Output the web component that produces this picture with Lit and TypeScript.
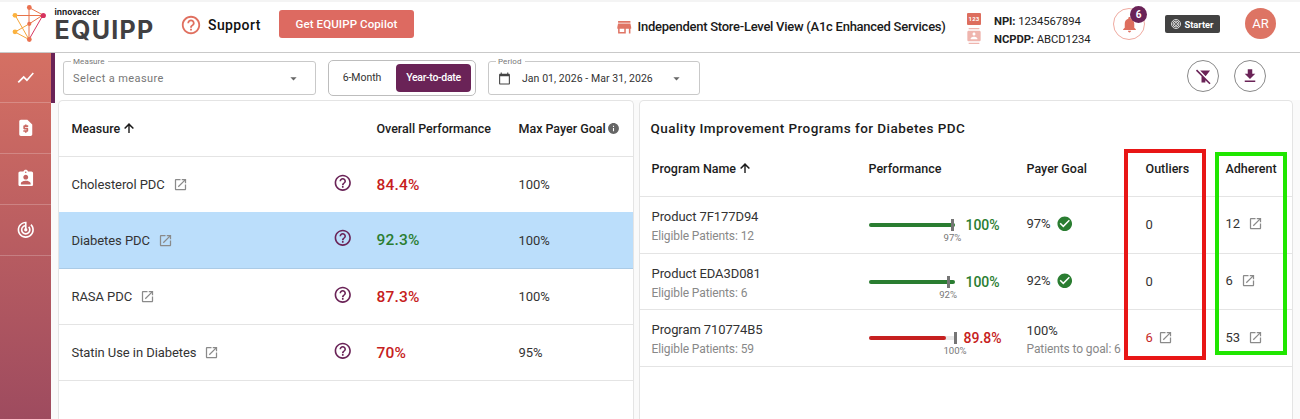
// app/src/app-root.ts
import { html, css, svg, LitElement } from 'lit';
import { customElement, property } from 'lit/decorators.js';
import { classMap } from 'lit/directives/class-map.js';

const ICONS: Record<string, string> = {
  chart: 'M3.5 18.49l6-6.01 4 4L22 6.92l-1.41-1.41-7.09 7.97-4-4L2 16.99z',
  quote:
    'M14 2H6c-1.1 0-1.99.9-1.99 2L4 20c0 1.1.89 2 1.99 2H18c1.1 0 2-.9 2-2V8l-6-6zm1 9h-4v1h3c.55 0 1 .45 1 1v3c0 .55-.45 1-1 1h-1v1h-2v-1H9v-2h4v-1h-3c-.55 0-1-.45-1-1v-3c0-.55.45-1 1-1h1V8h2v1h2v2z',
  patient:
    'M19 3h-4.18C14.4 1.84 13.3 1 12 1c-1.3 0-2.4.84-2.82 2H5c-1.1 0-2 .9-2 2v14c0 1.1.9 2 2 2h14c1.1 0 2-.9 2-2V5c0-1.1-.9-2-2-2zm-7 0c.55 0 1 .45 1 1s-.45 1-1 1-1-.45-1-1 .45-1 1-1zm0 4c1.66 0 3 1.34 3 3s-1.34 3-3 3-3-1.34-3-3 1.34-3 3-3zm6 12H6v-1.4c0-2 4-3.1 6-3.1s6 1.1 6 3.1V19z',
  track:
    'M19.07 4.93l-1.41 1.41C19.1 7.79 20 9.79 20 12c0 4.42-3.58 8-8 8s-8-3.58-8-8c0-4.08 3.05-7.44 7-7.93v2.02C8.16 6.57 6 9.03 6 12c0 3.31 2.69 6 6 6s6-2.69 6-6c0-1.66-.67-3.16-1.76-4.24l-1.41 1.41C15.55 9.9 16 10.9 16 12c0 2.21-1.79 4-4 4s-4-1.79-4-4c0-1.86 1.28-3.41 3-3.86v2.14c-.6.35-1 .98-1 1.72 0 1.1.9 2 2 2s2-.9 2-2c0-.74-.4-1.38-1-1.72V2h-1C6.48 2 2 6.48 2 12s4.48 10 10 10 10-4.48 10-10c0-2.76-1.12-5.26-2.93-7.07z',
  help: 'M11 18h2v-2h-2v2zm1-16C6.48 2 2 6.48 2 12s4.48 10 10 10 10-4.48 10-10S17.52 2 12 2zm0 18c-4.41 0-8-3.59-8-8s3.59-8 8-8 8 3.59 8 8-3.59 8-8 8zm0-14c-2.21 0-4 1.79-4 4h2c0-1.1.9-2 2-2s2 .9 2 2c0 2-3 1.75-3 5h2c0-2.25 3-2.5 3-5 0-2.21-1.79-4-4-4z',
  store: 'M20 4H4v2h16V4zm1 10v-2l-1-5H4l-1 5v2h1v6h10v-6h4v6h2v-6h1zm-9 4H6v-4h6v4z',
  bell: 'M12 22c1.1 0 2-.9 2-2h-4c0 1.1.89 2 2 2zm6-6v-5c0-3.07-1.64-5.64-4.5-6.32V4c0-.83-.67-1.5-1.5-1.5s-1.5.67-1.5 1.5v.68C7.63 5.36 6 7.92 6 11v5l-2 2v1h16v-1l-2-2z',
  contact:
    'M20 0H4v2h16V0zM4 24h16v-2H4v2zM20 4H4c-1.1 0-2 .9-2 2v12c0 1.1.9 2 2 2h16c1.1 0 2-.9 2-2V6c0-1.1-.9-2-2-2zm-8 2.75c1.24 0 2.25 1.01 2.25 2.25s-1.01 2.25-2.25 2.25S9.75 10.24 9.75 9 10.76 6.75 12 6.75zM17 17H7v-1.5c0-1.67 3.33-2.5 5-2.5s5 .83 5 2.5V17z',
  download: 'M19 9h-4V3H9v6H5l7 7 7-7zM5 18v2h14v-2H5z',
  calendar:
    'M20 3h-1V1h-2v2H7V1H5v2H4c-1.1 0-2 .9-2 2v16c0 1.1.9 2 2 2h16c1.1 0 2-.9 2-2V5c0-1.1-.9-2-2-2zm0 18H4V8h16v13z',
  up: 'M3.600 12l1.800 1.800 5.400-5.300V20.500h2.400V8.500l5.400 5.300 1.800-1.800L12 3.600z',
  open: 'M19 19H5V5h7V3H5c-1.11 0-2 .9-2 2v14c0 1.1.89 2 2 2h14c1.1 0 2-.9 2-2v-7h-2v7zM14 3v2h3.59l-9.83 9.83 1.41 1.41L19 6.41V10h2V3h-7z',
  info: 'M12 2C6.48 2 2 6.48 2 12s4.48 10 10 10 10-4.48 10-10S17.52 2 12 2zm1 15h-2v-6h2v6zm0-8h-2V7h2v2z',
  check:
    'M12 2C6.48 2 2 6.48 2 12s4.48 10 10 10 10-4.48 10-10S17.52 2 12 2zm-2 15l-5-5 1.41-1.41L10 14.17l7.59-7.59L19 8l-9 9z',
  down: 'M7 10l5 5 5-5z',
  filterOff: 'M21.300 3.600H7.300l7.700 8.200zM2.900 2.200L1.300 3.800l7.900 8V20.500h5.400v-3.300l5.800 5.800 1.600-1.600z',
};

interface Measure {
  name: string;
  performance: string;
  goal: string;
  met: boolean;
  selected?: boolean;
}

interface Program {
  name: string;
  eligible: number;
  performance: number;
  goal: number;
  toGoal?: number;
  outliers: number;
  adherent: number;
}

@customElement('eq-icon')
export class EqIcon extends LitElement {
  @property() name = '';
  @property({ type: Number }) size = 20;

  render() {
    return html`
      <svg width=${this.size} height=${this.size} viewBox="0 0 24 24" fill="currentColor">
        ${svg`<path d=${ICONS[this.name]}></path>`}
      </svg>
    `;
  }

  static styles = css`
    :host {
      display: inline-flex;
      flex: none;
    }
    svg {
      display: block;
      overflow: visible;
    }
  `;
}

@customElement('eq-header')
export class EqHeader extends LitElement {
  render() {
    return html`
      <div class="brand">
        <svg class="mark" width="36" height="40" viewBox="11 3 36 40" stroke-width="1">
          <g stroke="#f5a53c">
            <path d="M15 15L29 39.5" />
            <path d="M15 32L29 39.5" />
            <path d="M15 32L29 24" />
          </g>
          <g stroke="#e8734a">
            <path d="M29 7.500V39.500" />
            <path d="M15 15.500H43" />
            <path d="M29 7.500L43 15" />
            <path d="M29 24L43 15" />
          </g>
          <path d="M43 15L29 39.5" stroke="#d8365f" />
          <circle cx="29.300" cy="7.500" r="2.400" fill="#ea7150" />
          <circle cx="15" cy="15.300" r="2.400" fill="#fbb23e" />
          <circle cx="43.300" cy="15.500" r="2.600" fill="#d6335f" />
          <circle cx="29.300" cy="23.800" r="2.100" fill="#e8704f" />
          <circle cx="15" cy="31.800" r="2.400" fill="#fbb23e" />
          <circle cx="29.300" cy="39.500" r="2.400" fill="#ea7150" />
        </svg>
        <div class="wordmark">
          <span class="company">innovaccer</span>
          <span class="product">EQUIPP</span>
        </div>
      </div>
      <div class="support"><eq-icon name="help" size="22"></eq-icon><span>Support</span></div>
      <button class="copilot">Get EQUIPP Copilot</button>
      <div class="store"><eq-icon name="store" size="18.5"></eq-icon><span>Independent Store-Level View (A1c Enhanced Services)</span></div>
      <div class="id-icons">
        <span class="digits">123</span>
        <eq-icon class="contact" name="contact" size="16"></eq-icon>
      </div>
      <div class="ids">
        <div><b>NPI:</b> 1234567894</div>
        <div><b>NCPDP:</b> ABCD1234</div>
      </div>
      <div class="bell">
        <eq-icon name="bell" size="19"></eq-icon>
        <span class="count">6</span>
      </div>
      <div class="plan">
        <svg width="10" height="10" viewBox="0 0 10 10" fill="none" stroke="#fff" stroke-width=".8">
          <circle cx="5" cy="5" r="4.500" />
          <circle cx="5" cy="5" r="3" />
          <circle cx="5" cy="5" r="1.500" />
        </svg>
        <span>Starter</span>
      </div>
      <div class="avatar">AR</div>
    `;
  }

  static styles = css`
    :host {
      box-sizing: border-box;
      display: grid;
      grid-template-columns: 169px 98px 337px 352px 27px 119px 52px 80px 1fr;
      align-items: start;
      height: 53px;
      padding-left: 11px;
      border-top: 2px solid #f4f4f4;
      border-bottom: 1px solid #c9c9c9;
      background: #fff;
      white-space: nowrap;
    }
    .brand {
      display: flex;
      padding-top: 1px;
    }
    .wordmark {
      display: flex;
      flex-direction: column;
      margin-left: 7.500px;
      color: #414042;
      font-family: Inter, sans-serif;
    }
    .company {
      height: 14px;
      margin-top: 2px;
      font-size: 8.400px;
      line-height: 14px;
      font-weight: 700;
      color: #222;
    }
    .product {
      font-size: 25px;
      line-height: 22px;
      font-weight: 650;
      letter-spacing: 1.3px;
    }
    .support {
      display: flex;
      align-items: center;
      gap: 6px;
      padding-top: 12px;
      color: #e07060;
    }
    .support span {
      color: #111;
      font-size: 14px;
      line-height: 22px;
      font-weight: 500;
      letter-spacing: 0.4px;
    }
    .copilot {
      width: 135px;
      height: 28px;
      margin-top: 8px;
      margin-left: 1px;
      padding: 0 0 1px;
      border: 0;
      border-radius: 3px;
      background: #dd6a61;
      color: #fff;
      font-family: inherit;
      font-size: 11.500px;
      font-weight: 500;
      letter-spacing: 0.1px;
    }
    .store {
      display: flex;
      align-items: center;
      gap: 4px;
      padding-top: 14px;
      color: #e07565;
      font-size: 13px;
      line-height: 22px;
      font-weight: 500;
      letter-spacing: -0.26px;
    }
    .store span {
      color: #1a1a1a;
    }
    .id-icons {
      display: flex;
      flex-direction: column;
      align-items: center;
      width: 14px;
      padding-top: 11px;
      gap: 3px;
    }
    .digits {
      width: 14px;
      height: 12px;
      border-radius: 1px;
      background: #dd6e5e;
      color: #fff;
      font-size: 6px;
      line-height: 12px;
      font-weight: 700;
      text-align: center;
      letter-spacing: 0.2px;
    }
    .contact {
      color: #efb5ae;
    }
    .ids {
      padding-top: 11px;
      color: #222;
      font-size: 11.300px;
      line-height: 17.500px;
      letter-spacing: -0.08px;
    }
    .bell {
      position: relative;
      display: flex;
      align-items: center;
      justify-content: center;
      box-sizing: border-box;
      width: 32px;
      height: 32px;
      margin-top: 6px;
      border: 1px solid #efaaa0;
      border-radius: 50%;
      color: #dd6e5e;
    }
    .count {
      position: absolute;
      top: -3px;
      right: -3px;
      width: 17px;
      height: 17px;
      border-radius: 50%;
      background: #6a2357;
      color: #fff;
      font-size: 10px;
      line-height: 17px;
      font-weight: 700;
      text-align: center;
    }
    .plan {
      display: flex;
      align-items: center;
      justify-content: center;
      gap: 3px;
      width: 55px;
      height: 18px;
      margin-top: 13px;
      border-radius: 2px;
      background: #424242;
      color: #fff;
      font-size: 9.300px;
      font-weight: 700;
    }
    .avatar {
      width: 31px;
      height: 31px;
      margin-top: 6px;
      border-radius: 50%;
      background: #dd7464;
      color: #fff;
      font-size: 13px;
      line-height: 31px;
      text-align: center;
    }
  `;
}

@customElement('eq-toolbar')
export class EqToolbar extends LitElement {
  render() {
    return html`
      <fieldset class="measure">
        <legend>Measure</legend>
        <div class="value placeholder"><span>Select a measure</span><eq-icon name="down" size="15"></eq-icon></div>
      </fieldset>
      <div class="toggle">
        <span class="option">6-Month</span>
        <span class="option active">Year-to-date</span>
      </div>
      <fieldset class="period">
        <legend>Period</legend>
        <div class="value">
          <eq-icon class="calendar" name="calendar" size="13"></eq-icon>
          <span class="dates">Jan 01, 2026 - Mar 31, 2026</span>
          <eq-icon name="down" size="15"></eq-icon>
        </div>
      </fieldset>
      <div class="actions">
        <span class="round"><eq-icon name="filterOff" size="17"></eq-icon></span>
        <span class="round"><eq-icon name="download" size="18"></eq-icon></span>
      </div>
    `;
  }

  static styles = css`
    :host {
      display: flex;
      align-items: flex-start;
      height: 47px;
      padding: 0 34px 0 12px;
      background: #fff;
      white-space: nowrap;
    }
    fieldset {
      box-sizing: border-box;
      height: 40px;
      margin: 2px 0 0;
      padding: 0 9px;
      border: 1px solid #c9c9c9;
      border-radius: 3px;
    }
    legend {
      height: 12px;
      margin-left: -2px;
      padding: 0 3px 0 2px;
      color: #777;
      font-size: 8px;
      line-height: 13px;
      letter-spacing: 0.1px;
    }
    .measure {
      width: 253px;
    }
    .period {
      width: 212px;
      margin-left: 12px;
      padding-right: 0;
    }
    .value {
      display: flex;
      align-items: center;
      height: 22px;
      color: #333;
      font-size: 10.500px;
      letter-spacing: 0.06px;
    }
    .value eq-icon {
      color: #666;
    }
    .value .calendar {
      margin-right: 11px;
      color: #444;
    }
    .dates {
      flex: none;
      margin-right: 16px;
    }
    .placeholder {
      justify-content: space-between;
      padding-right: 5px;
      color: #777;
      font-size: 11px;
      letter-spacing: 0.4px;
    }
    .toggle {
      display: flex;
      box-sizing: border-box;
      width: 148px;
      height: 36px;
      margin: 7px 0 0 12px;
      padding: 3px 5px 3px 3px;
      border: 1px solid #bdbdbd;
      border-radius: 5px;
    }
    .option {
      flex: none;
      width: 64px;
      padding-right: 0;
      border-radius: 4px;
      color: #333;
      font-size: 10.500px;
      line-height: 28px;
      text-align: center;
      letter-spacing: -0.05px;
      text-indent: -4px;
    }
    .option.active {
      width: 75px;
      background: #6a2357;
      color: #fff;
      font-weight: 500;
      letter-spacing: -0.3px;
      text-indent: 0;
    }
    .actions {
      display: flex;
      gap: 15px;
      margin: 7px 0 0 auto;
    }
    .round {
      display: flex;
      align-items: center;
      justify-content: center;
      box-sizing: border-box;
      width: 32px;
      height: 32px;
      border: 1px solid #8a8a8a;
      border-radius: 50%;
      color: #6a2357;
    }
  `;
}

@customElement('app-root')
export class AppRoot extends LitElement {
  @property({ type: Array }) navItems: string[] = ['chart', 'quote', 'patient', 'track'];

  @property({ type: Array }) measures: Measure[] = [
    { name: 'Cholesterol PDC', performance: '84.4%', goal: '100%', met: false },
    { name: 'Diabetes PDC', performance: '92.3%', goal: '100%', met: true, selected: true },
    { name: 'RASA PDC', performance: '87.3%', goal: '100%', met: false },
    { name: 'Statin Use in Diabetes', performance: '70%', goal: '95%', met: false },
  ];

  @property({ type: Array }) programs: Program[] = [
    { name: 'Product 7F177D94', eligible: 12, performance: 100, goal: 97, outliers: 0, adherent: 12 },
    { name: 'Product EDA3D081', eligible: 6, performance: 100, goal: 92, outliers: 0, adherent: 6 },
    { name: 'Program 710774B5', eligible: 59, performance: 89.8, goal: 100, toGoal: 6, outliers: 6, adherent: 53 },
  ];

  renderMeasure(m: Measure) {
    return html`
      <div class=${classMap({ row: true, selected: !!m.selected })}>
        <div class="name"><span>${m.name}</span><eq-icon class="open" name="open" size="15"></eq-icon></div>
        <eq-icon class="why" name="help" size="19.5"></eq-icon>
        <div class=${classMap({ score: true, met: m.met })}>${m.performance}</div>
        <div>${m.goal}</div>
      </div>
    `;
  }

  renderProgram(p: Program) {
    const met = p.performance >= p.goal;
    return html`
      <div class="program">
        <div class="stacked">
          <div class="title">${p.name}</div>
          <div class="sub">Eligible Patients: ${p.eligible}</div>
        </div>
        <div class=${classMap({ perf: true, met })}>
          <div class="track">
            <div class="fill" style="width:${p.performance}%"></div>
            <div class="tick" style="left:${p.goal}%"></div>
            <div class="tick-label" style="left:${p.goal}%">${p.goal}%</div>
          </div>
          <div class="percent">${p.performance}%</div>
        </div>
        <div class=${classMap({ stacked: !!p.toGoal, raised: !p.toGoal })}>
          <div class="goal">${p.goal}%${met ? html`<eq-icon class="ok" name="check" size="17.5"></eq-icon>` : ''}</div>
          ${p.toGoal ? html`<div class="sub">Patients to goal: ${p.toGoal}</div>` : ''}
        </div>
        <div class=${classMap({ outliers: true, some: p.outliers > 0 })}>
          ${p.outliers}${p.outliers > 0 ? html`<eq-icon class="open" name="open" size="15"></eq-icon>` : ''}
        </div>
        <div class="adherent">${p.adherent}<eq-icon class="open" name="open" size="15"></eq-icon></div>
      </div>
    `;
  }

  render() {
    return html`
      <eq-header></eq-header>
      <div class="body">
        <nav>
          ${this.navItems.map(
            (name, index) => html`
              <div class=${classMap({ item: true, current: index === 0 })}>
                <eq-icon name=${name} size="19.5"></eq-icon>
              </div>
            `
          )}
        </nav>
        <main>
          <eq-toolbar></eq-toolbar>
          <div class="panels">
            <section class="measures">
              <div class="row head">
                <div class="sorted">Measure<eq-icon name="up" size="14"></eq-icon></div>
                <div></div>
                <div>Overall Performance</div>
                <div class="max">Max Payer Goal<eq-icon name="info" size="13"></eq-icon></div>
              </div>
              ${this.measures.map((m) => this.renderMeasure(m))}
            </section>
            <section class="programs">
              <h2>Quality Improvement Programs for Diabetes PDC</h2>
              <div class="program head">
                <div class="sorted">Program Name<eq-icon name="up" size="14"></eq-icon></div>
                <div>Performance</div>
                <div>Payer Goal</div>
                <div>Outliers</div>
                <div>Adherent</div>
              </div>
              ${this.programs.map((p) => this.renderProgram(p))}
              <div class="mark-outliers"></div>
              <div class="mark-adherent"></div>
            </section>
          </div>
        </main>
      </div>
    `;
  }

  static styles = css`
    :host {
      display: flex;
      flex-direction: column;
      width: 1300px;
      height: 419px;
      overflow: hidden;
      background: #fafafa;
      color: #333;
      font-family: Roboto, sans-serif;
      font-size: 13px;
    }
    .body {
      display: flex;
      flex: 1;
      min-height: 0;
    }
    nav {
      flex: none;
      width: 51px;
      background: linear-gradient(#d57063, #9e4b5f);
      color: #fff;
    }
    .item {
      display: flex;
      align-items: center;
      justify-content: center;
      box-sizing: border-box;
      height: 51px;
      border-bottom: 1px solid rgba(255, 255, 255, 0.22);
    }
    .item.current {
      position: relative;
      height: 50px;
    }
    .item.current::after {
      content: '';
      position: absolute;
      left: 51px;
      top: 0;
      width: 4px;
      height: 50px;
      background: #6a2357;
    }
    main {
      display: flex;
      flex: 1;
      flex-direction: column;
      min-width: 0;
    }
    .panels {
      display: flex;
      flex: 1;
      gap: 5px;
      padding: 0 7px 0 7px;
    }
    section {
      box-sizing: border-box;
      border: 1px solid #e4e4e4;
      border-bottom: 0;
      border-radius: 5px 5px 0 0;
      background: #fff;
      white-space: nowrap;
    }
    .measures {
      width: 576px;
    }
    .row {
      display: grid;
      grid-template-columns: 262px 43px 142px 1fr;
      align-items: center;
      box-sizing: border-box;
      height: 56px;
      padding-left: 12.500px;
      border-bottom: 1px solid #e4e4e4;
      letter-spacing: -0.07px;
    }
    .row.selected {
      background: #bbdefb;
      height: 57px;
      margin-top: -1px;
      border-color: #abcbe6;
    }
    .row.head {
      padding-bottom: 1px;
      letter-spacing: -0.02px;
    }
    .head {
      color: #1c1c1c;
      font-size: 12.500px;
      font-weight: 500;
    }
    .sorted,
    .max {
      display: flex;
      align-items: center;
      gap: 2px;
    }
    .max eq-icon {
      color: #666;
    }
    .max {
      gap: 1px;
    }
    .name {
      display: flex;
      align-items: center;
      gap: 8px;
    }
    .open {
      color: #8a8a8a;
    }
    .why {
      margin-top: -4px;
      margin-left: -1px;
      color: #6a2357;
    }
    .score {
      color: #c62020;
      font-size: 15.500px;
      font-weight: 480;
      letter-spacing: 0.2px;
    }
    .score.met {
      color: #2a7d31;
    }
    .programs {
      position: relative;
      width: 655px;
    }
    h2 {
      height: 39px;
      margin: 0;
      padding: 14px 0 0 11px;
      box-sizing: border-box;
      color: #1c1c1c;
      font-size: 13.500px;
      line-height: 26px;
      font-weight: 500;
      letter-spacing: 0.45px;
    }
    .program {
      display: grid;
      grid-template-columns: 217px 158px 119px 80px 1fr;
      align-items: center;
      box-sizing: border-box;
      height: 56.700px;
      padding-left: 12px;
      border-bottom: 1px solid #e4e4e4;
    }
    .program.head {
      height: 57px;
    }
    .stacked {
      padding-top: 4px;
    }
    .raised {
      padding-bottom: 2px;
    }
    .title {
      line-height: 18px;
      letter-spacing: -0.09px;
    }
    .sub {
      color: #888;
      font-size: 12px;
      line-height: 20px;
      letter-spacing: -0.11px;
    }
    .perf {
      display: flex;
      align-items: center;
      color: #c62020;
    }
    .perf.met {
      color: #2a7d31;
    }
    .track {
      position: relative;
      width: 86.500px;
      height: 4px;
      border-radius: 2px;
      background: #e8e8e8;
    }
    .fill {
      height: 4px;
      border-radius: 2px;
      background: currentColor;
    }
    .tick {
      position: absolute;
      top: -4px;
      width: 3px;
      height: 12px;
      margin-left: -1px;
      background: #757575;
    }
    .tick-label {
      position: absolute;
      top: 9px;
      width: 30px;
      margin-left: -15px;
      color: #777;
      font-size: 9.600px;
      line-height: 11px;
      text-align: center;
    }
    .percent {
      width: 55px;
      font-size: 14px;
      font-weight: 480;
      text-align: center;
    }
    .goal {
      display: flex;
      align-items: center;
      gap: 6px;
      height: 18px;
      letter-spacing: -0.1px;
    }
    .ok {
      color: #2a7d31;
    }
    .outliers,
    .adherent {
      display: flex;
      align-items: center;
      gap: 8px;
    }
    .outliers {
      gap: 5px;
    }
    .adherent,
    .some {
      padding-bottom: 2px;
    }
    .some {
      color: #c62828;
    }
    .mark-outliers,
    .mark-adherent {
      position: absolute;
      box-sizing: border-box;
    }
    .mark-outliers {
      left: 484px;
      top: 48px;
      width: 82px;
      height: 211px;
      border: 4px solid #e81616;
    }
    .mark-adherent {
      left: 575px;
      top: 51px;
      width: 72px;
      height: 203px;
      border: 4px solid #20e600;
    }
  `;
}
